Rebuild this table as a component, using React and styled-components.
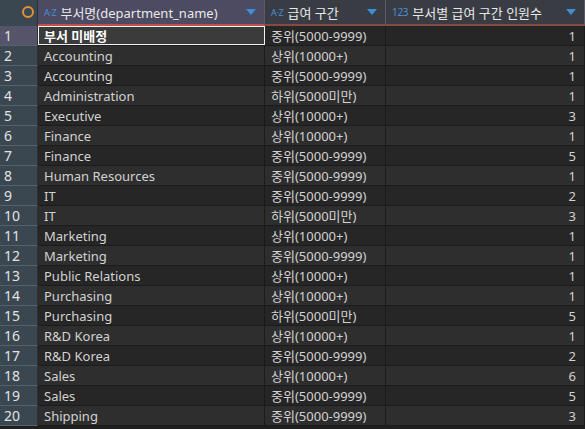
import styled, { createGlobalStyle } from "styled-components";

const GlobalStyle = createGlobalStyle`
  html, body {
    margin: 0;
    padding: 0;
    background: #1f1f1f;
  }
  body {
    font-family: "Noto Sans", "Noto Sans CJK KR", sans-serif;
    font-size: 13px;
  }
`;

const rows = [
  ["부서 미배정", "중위(5000-9999)", 1],
  ["Accounting", "상위(10000+)", 1],
  ["Accounting", "중위(5000-9999)", 1],
  ["Administration", "하위(5000미만)", 1],
  ["Executive", "상위(10000+)", 3],
  ["Finance", "상위(10000+)", 1],
  ["Finance", "중위(5000-9999)", 5],
  ["Human Resources", "중위(5000-9999)", 1],
  ["IT", "중위(5000-9999)", 2],
  ["IT", "하위(5000미만)", 3],
  ["Marketing", "상위(10000+)", 1],
  ["Marketing", "중위(5000-9999)", 1],
  ["Public Relations", "상위(10000+)", 1],
  ["Purchasing", "상위(10000+)", 1],
  ["Purchasing", "하위(5000미만)", 5],
  ["R&D Korea", "상위(10000+)", 1],
  ["R&D Korea", "중위(5000-9999)", 2],
  ["Sales", "상위(10000+)", 6],
  ["Sales", "중위(5000-9999)", 5],
  ["Shipping", "중위(5000-9999)", 3],
];

function App() {
  return (
    <>
      <GlobalStyle />
      <Grid>
        <Corner>
          <Circle />
        </Corner>
        <HeadCell $active>
          <TypeTag>A·Z</TypeTag>
          <HeadLabel>부서명(department_name)</HeadLabel>
          <Arrow />
        </HeadCell>
        <HeadCell>
          <TypeTag>A·Z</TypeTag>
          <HeadLabel>급여 구간</HeadLabel>
          <Arrow />
        </HeadCell>
        <HeadCell>
          <TypeTag $num>123</TypeTag>
          <HeadLabel>부서별 급여 구간 인원수</HeadLabel>
          <Arrow />
        </HeadCell>

        {rows.map(([dept, band, count], i) => (
          <Row key={i}>
            <RowNum $selected={i === 0}>{i + 1}</RowNum>
            <Cell $even={i % 2 === 1} $selected={i === 0}>
              {dept}
            </Cell>
            <Cell $even={i % 2 === 1}>{band}</Cell>
            <Cell $even={i % 2 === 1} $right>
              {count}
            </Cell>
          </Row>
        ))}
      </Grid>
    </>
  );
}

export default App;

const Grid = styled.div`
  display: grid;
  grid-template-columns: 38px 227px 121px 1fr;
  width: 585px;
  color: #d6d6d6;
`;

const Row = styled.div`
  display: contents;
`;

const Corner = styled.div`
  height: 24px;
  background: #3a4750;
  border-bottom: 2px solid #3a4750;
  border-right: 1px solid #2a3238;
  display: flex;
  align-items: center;
  justify-content: flex-end;
  padding-right: 3px;
`;

const Circle = styled.span`
  width: 8px;
  height: 8px;
  border: 2px solid #e58f34;
  border-radius: 50%;
`;

const HeadCell = styled.div`
  height: 24px;
  display: flex;
  align-items: center;
  padding: 0 8px 0 6px;
  background: ${(p) => (p.$active ? "#4d4b62" : "#393d43")};
  border-bottom: 2px solid ${(p) => (p.$active ? "#c0504a" : "#8a4842")};
  border-right: 1px solid #5a5a66;
  color: #e8e8e8;
  font-size: 13px;
  white-space: nowrap;
  overflow: hidden;
`;

const TypeTag = styled.span`
  color: #4a8fd6;
  font-size: ${(p) => (p.$num ? "10px" : "9px")};
  margin-right: 4px;
  letter-spacing: -0.3px;
`;

const HeadLabel = styled.span`
  flex: 1;
`;

const Arrow = styled.span`
  width: 0;
  height: 0;
  border-left: 5px solid transparent;
  border-right: 5px solid transparent;
  border-top: 6px solid #3d8fd8;
`;

const RowNum = styled.div`
  height: 19px;
  line-height: 20px;
  padding-left: 4px;
  font-size: 14px;
  color: #e2e2e2;
  background: ${(p) => (p.$selected ? "#56546a" : "#3a4750")};
  border-bottom: 1px solid #56626b;
  border-right: 1px solid #2a3238;
`;

const Cell = styled.div`
  height: ${(p) => (p.$selected ? "17px" : "19px")};
  line-height: ${(p) => (p.$selected ? "18px" : "20px")};
  padding: 0 ${(p) => (p.$right ? "8px" : "6px")} 0 6px;
  text-align: ${(p) => (p.$right ? "right" : "left")};
  background: ${(p) =>
    p.$selected ? "#3b3b3b" : p.$even ? "#2e2e2e" : "#262626"};
  border-bottom: 1px solid #1b1b1b;
  border-right: 1px solid #1b1b1b;
  color: ${(p) => (p.$selected ? "#ffffff" : "#d2d2d2")};
  font-weight: ${(p) => (p.$selected ? 700 : 400)};
  white-space: nowrap;
  overflow: hidden;
  ${(p) =>
    p.$selected &&
    `
    border: 1px solid #f0f0f0;
    padding-left: 5px;
  `}
`;
